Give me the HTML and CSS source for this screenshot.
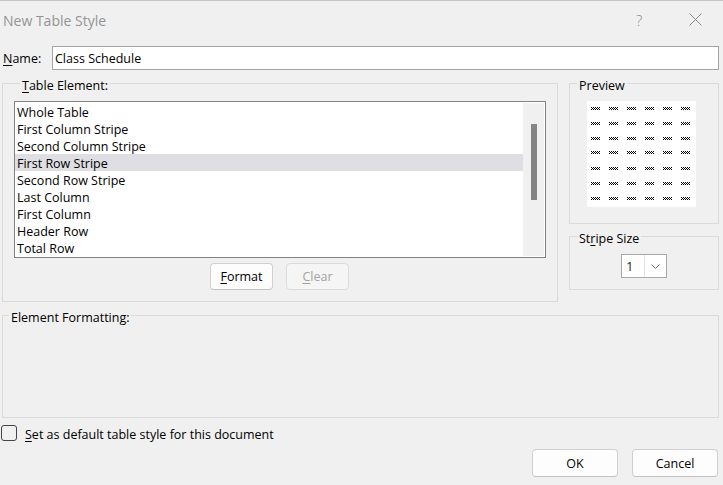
FILE: index.html
```html
<!DOCTYPE html>
<html lang="en">
<head>
<meta charset="utf-8">
<title>New Table Style</title>
<link rel="stylesheet" href="styles.css">
</head>
<body>
<div class="dialog">
  <div class="titlebar">
    <span class="title">New Table Style</span>
    <span class="help">?</span>
    <span class="close">
      <svg width="13" height="13" viewBox="0 0 13 13"><path d="M0.5 0.5 L12.5 12.5 M12.5 0.5 L0.5 12.5" stroke="#8a8a8a" stroke-width="1" fill="none"/></svg>
    </span>
  </div>

  <div class="name-row">
    <label class="name-label"><u>N</u>ame:</label>
    <div class="name-input">Class Schedule</div>
  </div>

  <div class="main">
    <fieldset class="group element-group">
      <legend><u>T</u>able Element:</legend>
      <div class="listbox">
        <div class="items">
          <div class="item">Whole Table</div>
          <div class="item">First Column Stripe</div>
          <div class="item">Second Column Stripe</div>
          <div class="item selected">First Row Stripe</div>
          <div class="item">Second Row Stripe</div>
          <div class="item">Last Column</div>
          <div class="item">First Column</div>
          <div class="item">Header Row</div>
          <div class="item">Total Row</div>
        </div>
        <div class="scrolltrack"><div class="thumb"></div></div>
      </div>
      <div class="group-buttons">
        <button class="btn small"><u>F</u>ormat</button>
        <button class="btn small disabled"><u>C</u>lear</button>
      </div>
    </fieldset>

    <div class="side">
      <fieldset class="group preview-group">
        <legend>Preview</legend>
        <div class="preview">
          <svg width="109" height="106" viewBox="0 0 109 106" shape-rendering="crispEdges">
            <defs>
              <pattern id="chk" width="2" height="2" patternUnits="userSpaceOnUse">
                <rect x="0" y="0" width="1" height="1" fill="#000"/>
                <rect x="1" y="1" width="1" height="1" fill="#000"/>
              </pattern>
              <g id="rowdash">
                <rect x="4" y="0" width="9" height="3" fill="url(#chk)"/>
                <rect x="22" y="0" width="9" height="3" fill="url(#chk)"/>
                <rect x="40" y="0" width="9" height="3" fill="url(#chk)"/>
                <rect x="58" y="0" width="9" height="3" fill="url(#chk)"/>
                <rect x="76" y="0" width="9" height="3" fill="url(#chk)"/>
                <rect x="94" y="0" width="9" height="3" fill="url(#chk)"/>
              </g>
            </defs>
            <use href="#rowdash" y="6"/>
            <use href="#rowdash" y="21"/>
            <use href="#rowdash" y="36"/>
            <use href="#rowdash" y="50"/>
            <use href="#rowdash" y="66"/>
            <use href="#rowdash" y="81"/>
            <use href="#rowdash" y="96"/>
          </svg>
        </div>
      </fieldset>

      <fieldset class="group stripe-group">
        <legend>St<u>r</u>ipe Size</legend>
        <div class="combo">
          <span class="combo-value">1</span>
          <span class="combo-arrow">
            <svg width="9" height="5" viewBox="0 0 9 5"><path d="M0.5 0.5 L4.5 4.5 L8.5 0.5" stroke="#6a6a6a" stroke-width="1" fill="none"/></svg>
          </span>
        </div>
      </fieldset>
    </div>
  </div>

  <fieldset class="group format-group">
    <legend>Element Formatting:</legend>
  </fieldset>

  <div class="check-row">
    <span class="checkbox"></span>
    <span class="check-label"><u>S</u>et as default table style for this document</span>
  </div>

  <div class="footer">
    <button class="btn big">OK</button>
    <button class="btn big">Cancel</button>
  </div>
</div>
</body>
</html>
```

FILE: styles.css
```css
html, body {
  margin: 0;
  padding: 0;
  background: #f0f0f0;
}

body {
  width: 723px;
  height: 485px;
  overflow: hidden;
  font-family: "Open Sans", "Noto Sans", sans-serif;
  font-size: 12.5px;
  color: #000;
}

u {
  text-decoration: underline;
  text-underline-offset: 2px;
  text-decoration-thickness: 1px;
}

.dialog {
  box-sizing: border-box;
  width: 723px;
  height: 485px;
  padding: 0 4px 0 2px;
  border-top: 1px solid #c4c4c4;
}

.titlebar {
  height: 37px;
  display: flex;
  align-items: center;
  margin-left: -2px;
  margin-right: -4px;
}

.title {
  font-size: 14px;
  color: #949494;
  padding-left: 3px;
  flex: 1;
  padding-top: 1px;
}

.help {
  font-size: 15px;
  font-weight: 300;
  color: #8a8a8a;
  width: 12px;
  margin-right: 41px;
}

.close {
  display: flex;
  width: 13px;
  margin-right: 21px;
}

.name-row {
  display: flex;
  align-items: center;
  margin-top: 8px;
  height: 24px;
}

.name-label {
  width: 49px;
  margin-left: 1px;
  padding-top: 1px;
}

.name-input {
  box-sizing: border-box;
  flex: 1;
  height: 24px;
  border: 1px solid #a3a3a3;
  background: #fff;
  padding-left: 2px;
  padding-top: 1px;
  line-height: 22px;
}

.main {
  display: flex;
  gap: 11px;
  margin-top: 5px;
}

.group {
  margin: 0;
  border: 1px solid #dadada;
  min-width: 0;
}

.group legend {
  padding: 0 2px;
  margin-left: 6px;
  line-height: 21px;
  height: 16px;
}

.element-group {
  box-sizing: border-box;
  width: 556px;
  padding: 10px 11px 11px 11px;
}

.listbox {
  box-sizing: border-box;
  height: 157px;
  border: 1px solid #828282;
  background: #fff;
  display: flex;
  padding: 0 1px 0 0;
}

.items {
  flex: 1;
  padding-top: 1px;
}

.item {
  height: 17px;
  line-height: 19px;
  padding-left: 2px;
  white-space: nowrap;
}

.item.selected {
  background: #dedee3;
}

.scrolltrack {
  width: 21px;
  margin-top: 1px;
  height: 153px;
  background: #f0f0f0;
  display: flex;
  justify-content: center;
}

.thumb {
  width: 6px;
  height: 76px;
  margin-top: 21px;
  background: #858585;
}

.group-buttons {
  display: flex;
  justify-content: center;
  gap: 13px;
  margin-top: 5px;
  margin-right: 1px;
}

.btn {
  box-sizing: border-box;
  font-family: inherit;
  font-size: 12.5px;
  color: #000;
  background: #fdfdfd;
  border: 1px solid #d0d0d0;
  border-bottom-color: #c2c2c2;
  border-radius: 4px;
  padding: 0;
}

.btn.small {
  width: 63px;
  height: 27px;
}

.btn.disabled {
  background: #f5f5f5;
  color: #a3a3a3;
  border-color: #dcdcdc;
}

.side {
  width: 150px;
  display: flex;
  flex-direction: column;
}

.preview-group {
  box-sizing: border-box;
  height: 149px;
  padding: 10px 0 0 0;
}

.side .group legend {
  margin-left: 7px;
}

.preview {
  width: 109px;
  height: 106px;
  margin-left: 17px;
  background: #fff;
  display: flex;
}

.stripe-group {
  box-sizing: border-box;
  margin-top: 4px;
  height: 62px;
  padding: 10px 0 0 0;
}

.combo {
  box-sizing: border-box;
  width: 46px;
  height: 24px;
  margin: 0 auto;
  border: 1px solid #a8a8a8;
  background: #fff;
  display: flex;
  align-items: center;
}

.combo-value {
  flex: 1;
  padding-left: 4px;
  font-size: 13px;
  color: #222;
}

.combo-arrow {
  box-sizing: border-box;
  width: 22px;
  height: 22px;
  border-left: 1px solid #e2e2e2;
  display: flex;
  align-items: center;
  justify-content: center;
  padding-top: 1px;
}

.format-group {
  box-sizing: border-box;
  margin-top: 5px;
  height: 111px;
  padding: 0;
}

.check-row {
  display: flex;
  align-items: center;
  margin-top: 7px;
  height: 16px;
  margin-left: -1px;
}

.checkbox {
  box-sizing: border-box;
  width: 16px;
  height: 16px;
  border: 1px solid #444;
  border-radius: 3px;
  margin-right: 8px;
}

.check-label {
  padding-top: 2px;
}

.footer {
  display: flex;
  justify-content: flex-end;
  gap: 14px;
  margin-top: 8px;
  margin-right: 1px;
}

.btn.big {
  width: 86px;
  height: 28px;
}
```
